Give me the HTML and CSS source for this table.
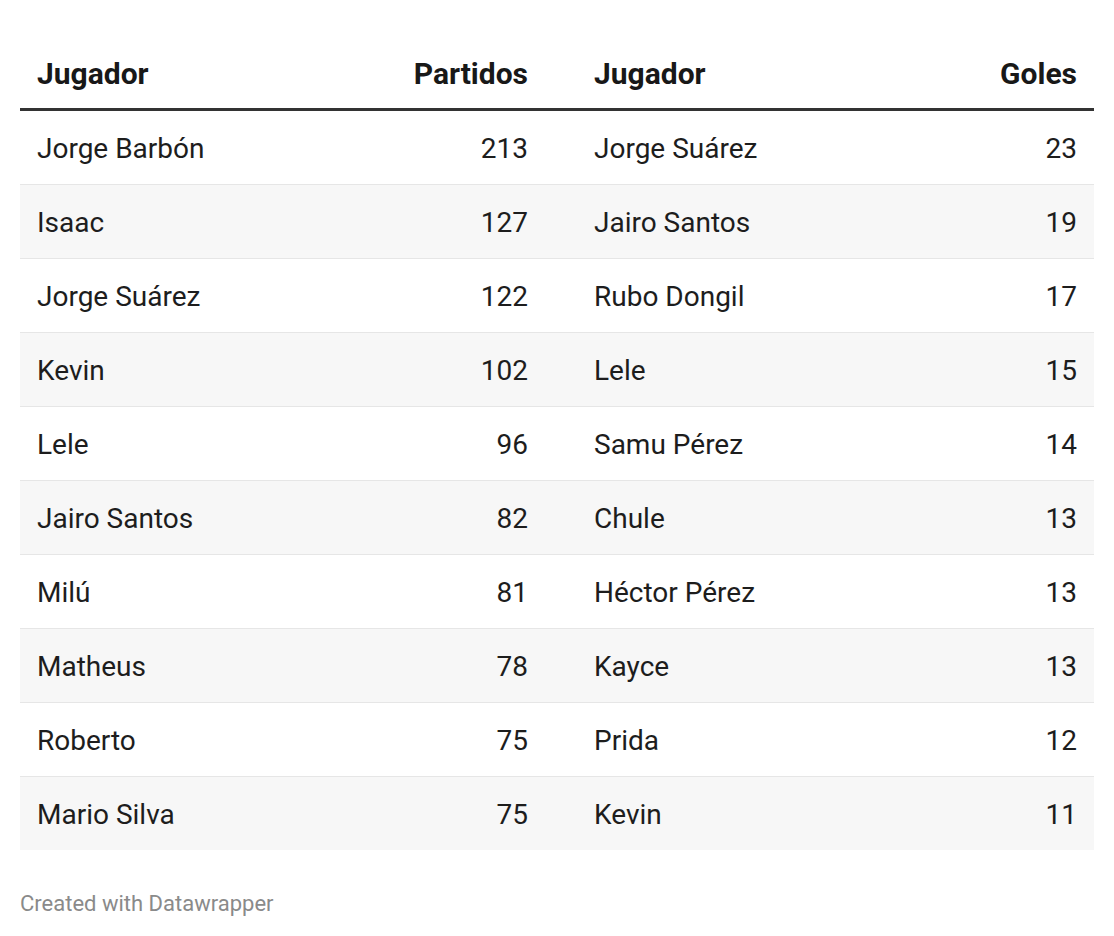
FILE: index.html
```html
<!DOCTYPE html>
<html lang="es">
<head>
<meta charset="utf-8">
<link rel="stylesheet" href="styles.css">
</head>
<body>
<div class="chart">
  <table class="dw-table">
    <colgroup>
      <col class="c1"><col class="c2"><col class="c3"><col class="c4">
    </colgroup>
    <thead>
      <tr>
        <th class="name first">Jugador</th>
        <th class="num mid">Partidos</th>
        <th class="name mid2">Jugador</th>
        <th class="num last">Goles</th>
      </tr>
    </thead>
    <tbody>
      <tr><td class="name first">Jorge Barbón</td><td class="num mid">213</td><td class="name mid2">Jorge Suárez</td><td class="num last">23</td></tr>
      <tr><td class="name first">Isaac</td><td class="num mid">127</td><td class="name mid2">Jairo Santos</td><td class="num last">19</td></tr>
      <tr><td class="name first">Jorge Suárez</td><td class="num mid">122</td><td class="name mid2">Rubo Dongil</td><td class="num last">17</td></tr>
      <tr><td class="name first">Kevin</td><td class="num mid">102</td><td class="name mid2">Lele</td><td class="num last">15</td></tr>
      <tr><td class="name first">Lele</td><td class="num mid">96</td><td class="name mid2">Samu Pérez</td><td class="num last">14</td></tr>
      <tr><td class="name first">Jairo Santos</td><td class="num mid">82</td><td class="name mid2">Chule</td><td class="num last">13</td></tr>
      <tr><td class="name first">Milú</td><td class="num mid">81</td><td class="name mid2">Héctor Pérez</td><td class="num last">13</td></tr>
      <tr><td class="name first">Matheus</td><td class="num mid">78</td><td class="name mid2">Kayce</td><td class="num last">13</td></tr>
      <tr><td class="name first">Roberto</td><td class="num mid">75</td><td class="name mid2">Prida</td><td class="num last">12</td></tr>
      <tr><td class="name first">Mario Silva</td><td class="num mid">75</td><td class="name mid2">Kevin</td><td class="num last">11</td></tr>
    </tbody>
  </table>
  <div class="footer">Created with Datawrapper</div>
</div>
</body>
</html>
```
FILE: styles.css
```css
html, body {
  margin: 0;
  padding: 0;
  background: #ffffff;
}
body {
  font-family: Roboto, "Liberation Sans", sans-serif;
  color: #1d1d1d;
}
.chart {
  padding: 40px 20px 0 20px;
}
.dw-table {
  width: 100%;
  border-collapse: collapse;
  table-layout: fixed;
}
.c1 { width: 280px; }
.c2 { width: 261px; }
.c3 { width: 280px; }
.c4 { width: auto; }
th {
  font-size: 30px;
  font-weight: 700;
  color: #181818;
  height: 68px;
  padding: 0;
  vertical-align: middle;
  border-bottom: 3px solid #333333;
  line-height: 1;
}
td {
  font-size: 28px;
  font-weight: 400;
  height: 71px;
  padding: 2px 0 0 0;
  vertical-align: middle;
  line-height: 1;
  border-bottom: 1px solid #e6e6e6;
}
tbody tr:nth-child(even) td {
  background: #f7f7f7;
}
tbody tr:last-child td {
  border-bottom: none;
}
.name { text-align: left; }
.num { text-align: right; }
.first { padding-left: 17px; }
.mid { padding-right: 33px; }
.mid2 { padding-left: 33px; }
.last { padding-right: 17px; }
.footer {
  margin-top: 41px;
  font-size: 22px;
  color: #8a8a8a;
}
```
